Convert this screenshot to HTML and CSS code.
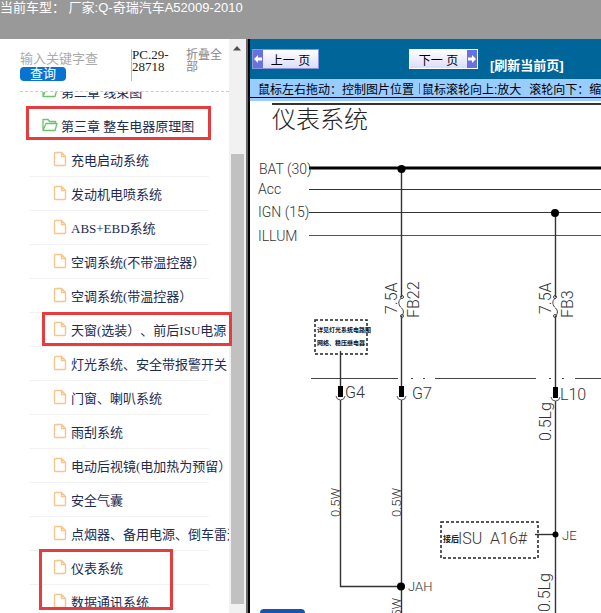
FILE: index.html
```html
<!DOCTYPE html>
<html lang="zh-CN">
<head>
    <meta charset="UTF-8">
    <meta name="viewport" content="width=device-width, initial-scale=1.0">
    <title>奇瑞汽车A52009-2010</title>
    <link rel="stylesheet" href="styles.css">
</head>
<body>
    <svg class="defs" width="0" height="0" aria-hidden="true">
        <symbol id="page" viewBox="0 0 14 16">
            <path d="M2.5 1.5H8.5L12.5 5.5V13.5Q12.5 14.5 11.5 14.5H2.5Q1.5 14.5 1.5 13.5V2.5Q1.5 1.5 2.5 1.5ZM8.5 1.5V5.5H12.5" fill="none" stroke="#f6c48f" stroke-width="1.4"/>
        </symbol>
        <symbol id="folder" viewBox="0 0 16 14">
            <path d="M1 12.5V1.5H6L7.5 3.5H13.5V5.5M1 12.5L4 5.5H15L13 12.5Z" fill="none" stroke="#6fc16f" stroke-width="1.3" stroke-linejoin="round"/>
        </symbol>
    </svg>

    <header class="top">当前车型： 厂家:Q-奇瑞汽车A52009-2010</header>

    <div class="layout">
        <aside class="sidebar">
            <div class="panel">
                <div class="search">
                    <div class="search-form">
                        <input type="text" placeholder="输入关键字查" aria-label="输入关键字查">
                        <button>查询</button>
                    </div>
                    <div class="code">PC.29-28718</div>
                    <a class="fold" href="#">折叠全部</a>
                </div>
                <nav class="tree">
                    <ul>
                        <li class="chapter"><a href="#"><svg><use href="#folder"/></svg>第二章 线束图</a></li>
                        <li class="chapter"><a href="#"><svg><use href="#folder"/></svg>第三章 整车电器原理图</a></li>
                        <li><a href="#"><svg><use href="#page"/></svg>充电启动系统</a></li>
                        <li><a href="#"><svg><use href="#page"/></svg>发动机电喷系统</a></li>
                        <li><a href="#"><svg><use href="#page"/></svg>ABS+EBD系统</a></li>
                        <li><a href="#"><svg><use href="#page"/></svg>空调系统(不带温控器）</a></li>
                        <li><a href="#"><svg><use href="#page"/></svg>空调系统(带温控器）</a></li>
                        <li><a href="#"><svg><use href="#page"/></svg>天窗(选装）、前后ISU电源</a></li>
                        <li><a href="#"><svg><use href="#page"/></svg>灯光系统、安全带报警开关</a></li>
                        <li><a href="#"><svg><use href="#page"/></svg>门窗、喇叭系统</a></li>
                        <li><a href="#"><svg><use href="#page"/></svg>雨刮系统</a></li>
                        <li><a href="#"><svg><use href="#page"/></svg>电动后视镜(电加热为预留）</a></li>
                        <li><a href="#"><svg><use href="#page"/></svg>安全气囊</a></li>
                        <li><a href="#"><svg><use href="#page"/></svg>点烟器、备用电源、倒车雷达</a></li>
                        <li><a href="#"><svg><use href="#page"/></svg>仪表系统</a></li>
                        <li><a href="#"><svg><use href="#page"/></svg>数据通讯系统</a></li>
                    </ul>
                </nav>
            </div>
            <div class="scrollbar">
                <svg width="10" height="6" viewBox="0 0 10 6"><path d="M1 5.5L5 1L9 5.5Z" fill="#505050"/></svg>
                <div class="thumb"></div>
            </div>
            <div class="mark mark-chapter"></div>
            <div class="mark mark-sunroof"></div>
            <div class="mark mark-meter"></div>
        </aside>

        <main class="viewer">
            <div class="toolbar">
                <button class="pager prev"><svg viewBox="0 0 10 17"><path d="M1 8.5L5 4.5V7H9V10H5V12.5Z" fill="#fff"/></svg><span>上一 页</span></button>
                <button class="pager next"><span>下一 页</span><svg viewBox="0 0 10 17"><path d="M9 8.5L5 4.5V7H1V10H5V12.5Z" fill="#fff"/></svg></button>
                <a class="refresh" href="#">[刷新当前页]</a>
            </div>
            <div class="hint"><span>鼠标左右拖动：控制图片位置</span><i></i><span>鼠标滚轮向上:放大</span><span class="down">滚轮向下：缩小</span></div>
            <div class="stage">
                <svg class="diagram" width="100%" height="100%">
                    <!-- frame and supply rails -->
                    <g stroke="#333">
                        <line x1="22" y1="3" x2="100%" y2="3" stroke-width="2"/>
                        <line x1="59" y1="67" x2="100%" y2="67" stroke="#000" stroke-width="3"/>
                        <line x1="59" y1="88.5" x2="100%" y2="88.5"/>
                        <line x1="59" y1="111.5" x2="100%" y2="111.5"/>
                        <line x1="59" y1="134.5" x2="100%" y2="134.5" stroke="#555"/>
                    </g>
                    <!-- connector line -->
                    <g stroke="#444">
                        <line x1="61" y1="277.5" x2="148" y2="277.5"/>
                        <line x1="161" y1="277.5" x2="163" y2="277.5"/>
                        <line x1="173" y1="277.5" x2="175" y2="277.5"/>
                        <line x1="185" y1="277.5" x2="286" y2="277.5"/>
                        <line x1="299" y1="277.5" x2="301" y2="277.5"/>
                        <line x1="312" y1="277.5" x2="314" y2="277.5"/>
                        <line x1="325" y1="277.5" x2="100%" y2="277.5"/>
                    </g>
                    <!-- wires -->
                    <g fill="none" stroke="#333" stroke-width="1.4">
                        <path d="M151.5 68V196M151.5 215V286M151.5 299V520"/>
                        <path d="M90.5 250V286M90.5 299V485.5H151.5"/>
                        <path d="M305.5 112V196M305.5 215V288M305.5 300V520"/>
                        <path d="M285 433.5H305"/>
                    </g>
                    <!-- fuses -->
                    <g fill="none" stroke="#444">
                        <path d="M151.5 197C147 200 149 205 151.5 207S154 213 151.5 215"/>
                        <path d="M305.5 197C301 200 303 205 305.5 207S308 213 305.5 215"/>
                        <circle cx="152" cy="196" r="1.5"/><circle cx="152" cy="215" r="1.5"/>
                        <circle cx="305" cy="196" r="1.5"/><circle cx="305" cy="215" r="1.5"/>
                    </g>
                    <!-- connectors -->
                    <path d="M88 285h5v11h-5zM149 285h5v11h-5zM303 286h5v11h-5z"/>
                    <path d="M86 295Q86.5 299 90.5 299T95 295M147 295Q147.5 299 151.5 299T156 295M301 296Q301.5 300 305.5 300T310 296" fill="none" stroke="#555"/>
                    <circle cx="151.5" cy="68" r="4"/>
                    <circle cx="305" cy="112" r="4"/>
                    <circle cx="151" cy="485.5" r="4"/>
                    <circle cx="305.5" cy="433.5" r="3"/>
                    <g fill="none" stroke="#222" stroke-width="1.5" stroke-dasharray="3 2">
                        <rect x="65" y="219" width="52" height="34"/>
                        <rect x="191" y="421" width="97" height="36"/>
                    </g>
                    <text class="title" x="22" y="27">仪表系统</text>
                    <g class="cad rail">
                        <text x="9" y="73">BAT (30)</text>
                        <text x="8" y="93">Acc</text>
                        <text x="8" y="116">IGN (15)</text>
                        <text x="8" y="140">ILLUM</text>
                    </g>
                    <g class="cad">
                        <text x="95" y="297">G4</text>
                        <text x="162" y="298">G7</text>
                        <text x="310" y="299">L10</text>
                        <text x="208" y="443" xml:space="preserve">ISU  A16#</text>
                        <text transform="translate(147 213) rotate(-90)">7.5A</text>
                        <text transform="translate(169 217) rotate(-90)">FB22</text>
                        <text transform="translate(301 213) rotate(-90)">7.5A</text>
                        <text transform="translate(323 217) rotate(-90)">FB3</text>
                        <text transform="translate(301 340) rotate(-90)">0.5Lg</text>
                        <text transform="translate(300 511) rotate(-90)">0.5Lg</text>
                    </g>
                    <g class="cad small">
                        <text x="158" y="490">JAH</text>
                        <text x="312" y="439">JE</text>
                        <text transform="translate(90 416) rotate(-90)">0.5W</text>
                        <text transform="translate(151 416) rotate(-90)">0.5W</text>
                        <text transform="translate(151 526) rotate(-90)">0.5W</text>
                    </g>
                    <g class="note">
                        <text x="67" y="231">详见灯光系统电路图</text>
                        <text x="67" y="244">网络、稳压继电器</text>
                        <text class="wide" x="193" y="441">接后</text>
                    </g>
                </svg>
                <button class="more" aria-label="更多"></button>
            </div>
        </main>
    </div>
</body>
</html>
```
FILE: styles.css
```css
* {
    box-sizing: border-box;
}
body {
    margin: 0;
    height: 100vh;
    display: flex;
    flex-direction: column;
    overflow: hidden;
    background-color: #fff;
    font-family: "Liberation Sans", "Noto Sans CJK SC", sans-serif;
    font-size: 13px;
    text-spacing-trim: space-all;
}
a {
    color: inherit;
    text-decoration: none;
}
button, input {
    font: inherit;
    border: 0;
    padding: 0;
}
.defs {
    position: absolute;
}
.top {
    flex: 0 0 39px;
    background-color: #999;
    color: #fff;
    line-height: 16px;
}
.layout {
    flex: 1;
    display: flex;
    min-height: 0;
}

/* sidebar */
.sidebar {
    position: relative;
    flex: 0 0 250px;
    display: flex;
    overflow: hidden;
    border-right: 2px solid #000;
    box-shadow: inset -2px 0 #666;
    font-family: "Liberation Serif", "Noto Sans CJK SC", serif;
}
.panel {
    flex: 1;
    min-width: 0;
    display: flex;
    flex-direction: column;
    padding-left: 20px;
}
.search {
    flex: 0 0 53px;
    display: flex;
    padding-top: 10px;
    border-bottom: 1px dashed #ccc;
    line-height: 12px;
}
.search-form {
    width: 111px;
    padding-top: 2px;
}
.search-form input {
    display: block;
    width: 100%;
    height: 16px;
    background: none;
}
.search-form input::placeholder {
    color: #aaa;
}
.search-form button {
    display: block;
    width: 46px;
    height: 14px;
    border-radius: 4px;
    background-color: #0974cf;
    color: #fff;
    line-height: 12px;
}
.code {
    width: 55px;
    height: 32px;
    border-left: 1px solid #bbb;
    color: #222;
}
.fold {
    width: 38px;
    color: #888;
    font-size: 12px;
}
.tree {
    flex: 1;
    overflow: hidden;
}
.tree ul {
    list-style: none;
    margin: -17px 20px 0 9px;
    padding: 0;
}
.tree li {
    height: 34px;
    padding-left: 24px;
    border-bottom: 1px solid #f2f2f2;
    white-space: nowrap;
}
.tree li.chapter {
    padding-left: 13px;
    border-color: transparent;
}
.tree a {
    display: flex;
    align-items: center;
    gap: 4px;
    height: 32px;
    color: #1c2b50;
}
.tree svg {
    flex: none;
    width: 14px;
    height: 16px;
}
.tree .chapter a {
    gap: 3px;
}
.tree .chapter svg {
    width: 16px;
    height: 14px;
}
.scrollbar {
    flex: 0 0 19px;
    display: flex;
    flex-direction: column;
    align-items: center;
    padding: 6px 4px 9px 1px;
    background: linear-gradient(to right, #f1f1f1 17px, transparent 17px);
}
.thumb {
    flex: 1;
    width: 13px;
    margin-top: 103px;
    background-color: #c1c1c1;
}
.mark {
    position: absolute;
    border: 3px solid #e53c40;
    pointer-events: none;
}
.mark-chapter {
    left: 26px;
    top: 67px;
    width: 185px;
    height: 34px;
}
.mark-sunroof {
    left: 42px;
    top: 273px;
    width: 190px;
    height: 34px;
}
.mark-meter {
    left: 39px;
    top: 510px;
    width: 134px;
    height: 61px;
}

/* viewer */
.viewer {
    flex: 1;
    min-width: 0;
    display: flex;
    flex-direction: column;
}
.toolbar {
    flex: 0 0 40px;
    display: flex;
    align-items: center;
    padding-left: 2px;
    background-color: #069;
}
.pager {
    display: flex;
    align-items: center;
    height: 20px;
    border: 1px solid #8a93dd;
    background: linear-gradient(#fff, #dcdcfa);
    color: #000;
    font-size: 12px;
    white-space: nowrap;
}
.pager svg {
    width: 10px;
    height: 18px;
    background-color: #6a70dc;
}
.pager span {
    flex: 1;
}
.prev {
    width: 67px;
}
.next {
    width: 69px;
    margin-left: 90px;
    border-color: #fff;
}
.refresh {
    margin-left: 12px;
    padding-top: 10px;
    color: #fff;
    font-weight: bold;
    white-space: nowrap;
}
.hint {
    flex: 0 0 22px;
    display: flex;
    align-items: center;
    padding: 0 0 3px 8px;
    overflow: hidden;
    background: linear-gradient(#9cf 18px, #000 18px, #000 19px, #9cf 19px);
    color: #000;
    font-size: 12px;
    white-space: nowrap;
}
.hint i {
    flex: none;
    width: 1px;
    height: 11px;
    margin: 0 2px 0 5px;
    background-color: #678;
}
.hint .down {
    margin-left: 8px;
}
.stage {
    position: relative;
    flex: 1;
    min-height: 0;
    overflow: hidden;
}
.diagram {
    display: block;
}
.title {
    font-family: "Noto Sans CJK SC", sans-serif;
    font-size: 24px;
    font-weight: 300;
    fill: #222;
}
.cad {
    font-family: "Liberation Sans Narrow", "Roboto", sans-serif;
    font-size: 16px;
    font-weight: 300;
    fill: #333;
}
.rail {
    font-size: 14px;
}
.small {
    font-size: 13px;
}
.note {
    font-family: "Noto Sans CJK SC", sans-serif;
    font-size: 6px;
    font-weight: bold;
    fill: #111;
}
.note .wide {
    font-size: 8px;
}
.more {
    position: absolute;
    left: 10px;
    bottom: 0;
    width: 45px;
    height: 4px;
    border-radius: 4px 4px 0 0;
    background-color: #1a55ad;
}
```
